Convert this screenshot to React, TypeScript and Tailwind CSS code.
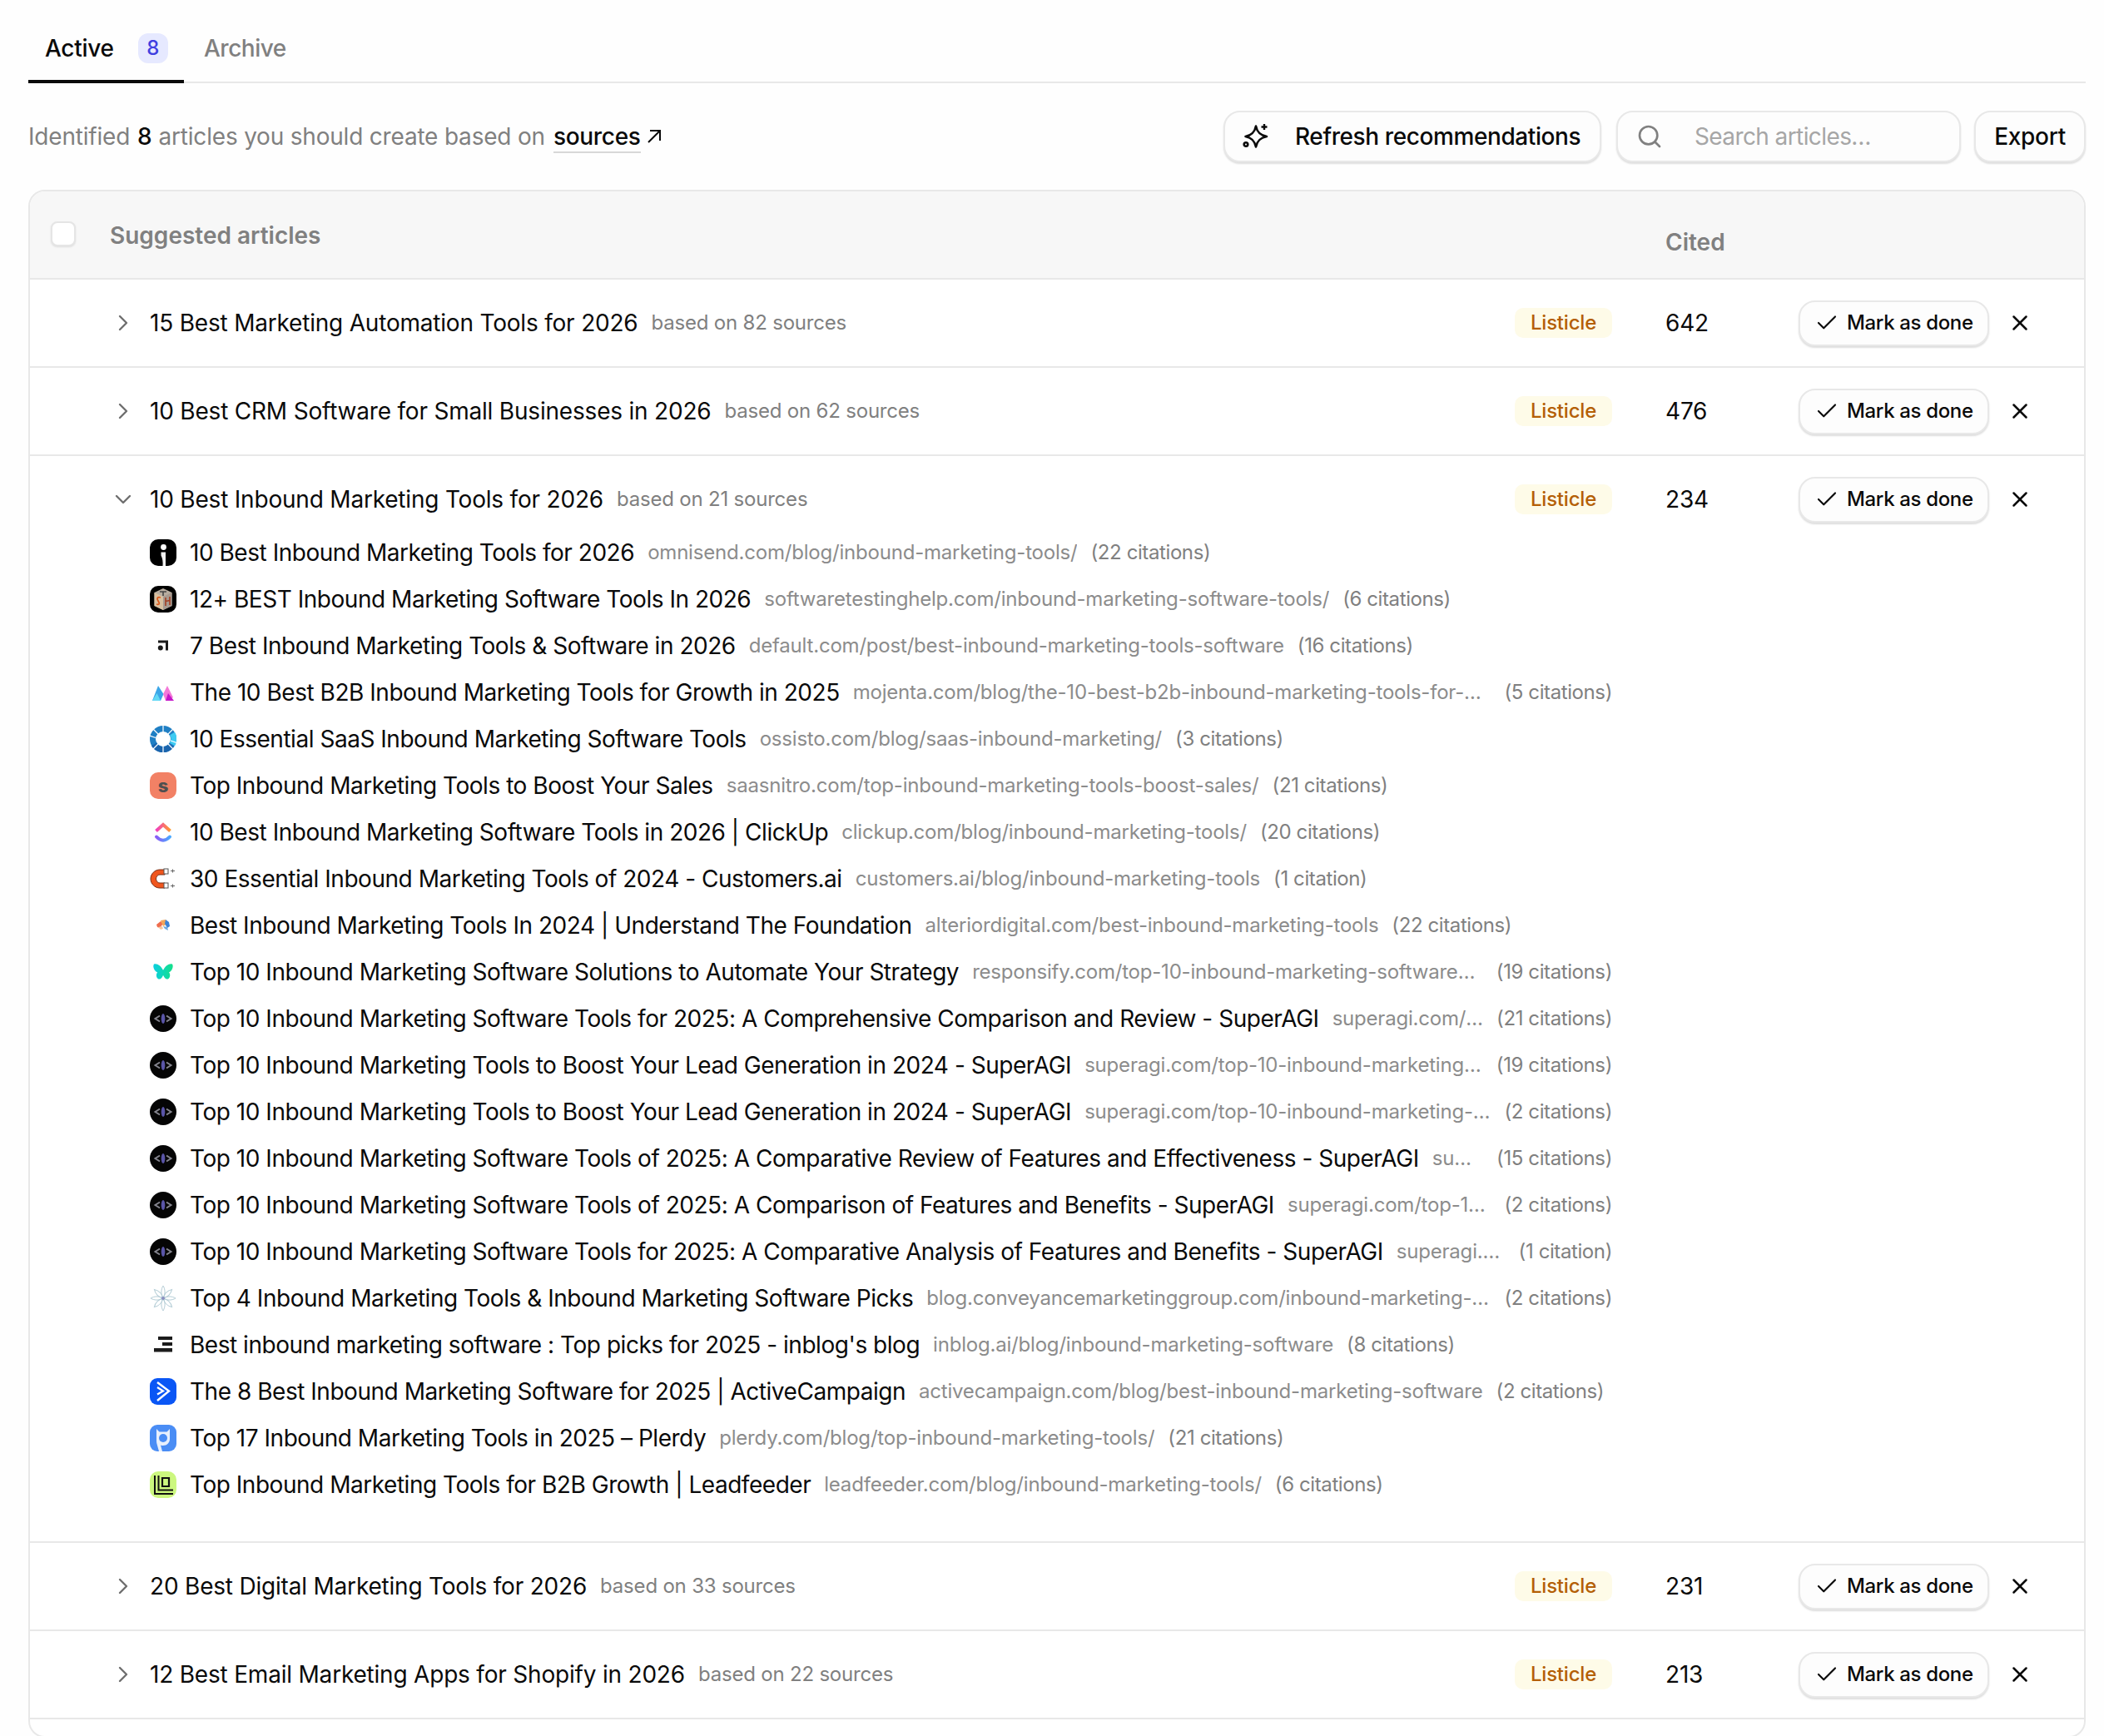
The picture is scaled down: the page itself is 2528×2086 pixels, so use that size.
import React from "react";
import { Check, ChevronDown, ChevronRight, Search, X } from "lucide-react";

type IconKind =
  | "omnisend" | "sth" | "default" | "mojenta" | "ossisto" | "saasnitro" | "clickup" | "customers"
  | "alterior" | "responsify" | "superagi" | "conveyance" | "inblog" | "activecampaign" | "plerdy" | "leadfeeder";

function Favicon({ kind }: { kind: IconKind }) {
  const c = "h-8 w-8 shrink-0";
  switch (kind) {
    case "omnisend":
      return (
        <svg className={c} viewBox="0 0 32 32">
          <rect width="32" height="32" rx="10" fill="#000" />
          <circle cx="16.5" cy="9.5" r="3.4" fill="#fff" />
          <path d="M13.5 15.500h5.500V32h-3.500c.4-5-.2-9-2-12.500z" fill="#f2f2f2" />
        </svg>
      );
    case "sth":
      return (
        <svg className={c} viewBox="0 0 32 32">
          <rect width="32" height="32" rx="10" fill="#000" />
          <path d="M16 3l10.500 5v16L16 29 5.500 24V8z" fill="#b8ada0" />
          <path d="M5.500 8L16 13v16L5.500 24z" fill="#d8c0a0" />
          <path d="M26.500 8L16 13v16l10.500-5z" fill="#a89a90" />
          <path d="M13 14c-4-1-5 1-3 4s2 5-2 4" fill="none" stroke="#d9591c" strokeWidth="1.800" />
          <path d="M19 14v10M24 13v10M19 18.500l5-1" fill="none" stroke="#a33f22" strokeWidth="1.600" />
          <path d="M12 7h8M16 7v5" stroke="#444" strokeWidth="1.600" />
        </svg>
      );
    case "default":
      return (
        <svg className={c} viewBox="0 0 32 32">
          <path d="M10 9.500h12v12h-3v-9h-9z" fill="#1a1a1a" />
          <circle cx="12.800" cy="18.500" r="3" fill="#1a1a1a" />
        </svg>
      );
    case "mojenta":
      return (
        <svg className={c} viewBox="0 0 32 32">
          <path d="M10 8l6.500 10-3.500 8H3z" fill="#3ba6e8" />
          <path d="M3 26l5.500-9 4.500 9z" fill="#62d8f5" />
          <path d="M21 8l-5 10 3 8h3l6-4z" fill="#f479d8" />
          <path d="M19 26l3-9 7 9z" fill="#c416c9" />
        </svg>
      );
    case "ossisto":
      return (
        <svg className={c} viewBox="0 0 32 32">
          <circle cx="16" cy="16" r="12.500" fill="none" stroke="#1f7fc4" strokeWidth="7" />
          <path d="M27 9.500A12.500 12.500 0 0 1 27 22.500" fill="none" stroke="#3ecbf2" strokeWidth="7" />
          <path d="M5 22.500A12.500 12.500 0 0 0 26 23.500" fill="none" stroke="#1a64ad" strokeWidth="7" />
          <path d="M16 0v7M16 25v7M0 12l7 2.500M25 18l7 2.500M4 28l6-6M22 10l6-6M4 4l6 6M22 22l6 6" stroke="#fff" strokeWidth="1.200" />
        </svg>
      );
    case "saasnitro":
      return (
        <div className="flex h-8 w-8 shrink-0 items-center justify-center rounded-[10px] bg-[#f28165]">
          <span className="text-[22px] font-extrabold leading-none text-[#4f4f4f]">s</span>
        </div>
      );
    case "clickup":
      return (
        <svg className={c} viewBox="0 0 32 32">
          <defs>
            <linearGradient id="cu1" x1="0" y1="0" x2="1" y2="0">
              <stop offset="0" stopColor="#f03ec2" />
              <stop offset="1" stopColor="#ff9a2e" />
            </linearGradient>
            <linearGradient id="cu2" x1="0" y1="0" x2="1" y2="0">
              <stop offset="0" stopColor="#8a5cf6" />
              <stop offset="1" stopColor="#4aa8ff" />
            </linearGradient>
          </defs>
          <path d="M7.500 14.500L16 7l8.500 7.500" fill="none" stroke="url(#cu1)" strokeWidth="4" />
          <path d="M8 21.500c5 5.500 11 5.500 16 0" fill="none" stroke="url(#cu2)" strokeWidth="4" strokeLinecap="round" />
        </svg>
      );
    case "customers":
      return (
        <svg className={c} viewBox="0 0 32 32">
          <path d="M18 5H12C6 5 1 10 1 16s5 11 11 11h6v-6h-6c-2.500 0-4.500-2.300-4.500-5s2-5 4.500-5h6z" fill="#f0561d" stroke="#7c2d12" strokeWidth="1" />
          <rect x="17" y="4" width="5" height="6" fill="#fff" stroke="#555" strokeWidth="1" />
          <rect x="17" y="21" width="5" height="6" fill="#fff" stroke="#555" strokeWidth="1" />
          <path d="M25 6.500h5M25 24.500h5M27.500 4.500v4M27.500 22.500v4" stroke="#666" strokeWidth="1" />
        </svg>
      );
    case "alterior":
      return (
        <svg className={c} viewBox="0 0 32 32">
          <path d="M8 15l5-4 3 3-4 5-3-1z" fill="#ef6c4d" />
          <path d="M13 10l6-1 2 5-5 3z" fill="#f2a65a" />
          <path d="M19 9l4 3 1 5-3 2-3-5z" fill="#3b82d6" />
          <path d="M16 17l5 1 1 4-4-2z" fill="#6ea8e0" />
          <path d="M10 18l5-1 1 3-3 1z" fill="#f5c7a0" />
        </svg>
      );
    case "responsify":
      return (
        <svg className={c} viewBox="0 0 32 32">
          <defs>
            <linearGradient id="rs" x1="0" y1="0" x2="1" y2="0">
              <stop offset="0" stopColor="#0bcfe0" />
              <stop offset="1" stopColor="#14e08a" />
            </linearGradient>
          </defs>
          <path d="M5 6.500c3.500-1.500 8.500 2 10.500 6.500.3.800.7.800 1 0 2-4.500 7-8 10.500-6.500 2 3-.5 8.500-4 10 2 2 1.500 6-.5 7.500-2.500 1.500-5-.5-6-3.500-.2-.5-.6-.5-.8 0-1 3-3.500 5-6 3.500-2-1.500-2.500-5.500-.5-7.500C5.500 15 3 9.500 5 6.500z" fill="url(#rs)" />
        </svg>
      );
    case "superagi":
      return (
        <svg className={c} viewBox="0 0 32 32">
          <circle cx="16" cy="16" r="16" fill="#050505" />
          <path d="M12 12.500l-5.500 3.500 5.500 3.500M20 12.500l5.500 3.500-5.500 3.500" fill="none" stroke="#85858f" strokeWidth="2" />
          <ellipse cx="16" cy="16" rx="2.300" ry="6" fill="#5a55a8" />
        </svg>
      );
    case "conveyance":
      return (
        <svg className={c} viewBox="0 0 32 32">
          {[0, 45, 90, 135, 180, 225, 270, 315].map((a) => (
            <path key={a} d="M16 16C13 11 13.500 5 16 1c2.500 4 3 10 0 15z" fill="none" stroke="#b4cdd6" strokeWidth="1" transform={`rotate(${a} 16 16)`} />
          ))}
          <circle cx="16" cy="16" r="2" fill="#8a8fc0" />
        </svg>
      );
    case "inblog":
      return (
        <svg className={c} viewBox="0 0 32 32">
          <path d="M10 6h17v4H10zM15 13h12v4H15zM5 20h22v4.500H5z" fill="#1c1c1c" />
        </svg>
      );
    case "activecampaign":
      return (
        <svg className={c} viewBox="0 0 32 32">
          <rect width="32" height="32" rx="9" fill="#0a56f5" />
          <path d="M9 5l14 10.500L9 27" fill="none" stroke="#fff" strokeWidth="2.400" />
          <path d="M9 11l7 4.500-7 4" fill="none" stroke="#fff" strokeWidth="2.200" />
        </svg>
      );
    case "plerdy":
      return (
        <svg className={c} viewBox="0 0 32 32">
          <rect width="32" height="32" rx="9" fill="#4a8df5" />
          <path d="M8 5l3.500 3.500h9L24 5v12c0 4.500-3.500 8-8 8-1.200 0-2.200-.2-3-.6L15 32h-4l-2.500-9C8 21.500 8 19 8 17z" fill="#e8f0fd" />
          <circle cx="16" cy="16" r="5" fill="#4a8df5" />
        </svg>
      );
    case "leadfeeder":
      return (
        <svg className={c} viewBox="0 0 32 32">
          <rect width="32" height="32" rx="10" fill="#ccf77f" />
          <path d="M6 5v22h22M10.500 5v17.500h17.500" fill="none" stroke="#111" strokeWidth="2" />
          <path d="M15 8h8v10h-8z" fill="none" stroke="#111" strokeWidth="2.200" />
        </svg>
      );
  }
}

const sources: { icon: IconKind; title: string; url: string; cites: string }[] = [
  { icon: "omnisend", title: "10 Best Inbound Marketing Tools for 2026", url: "omnisend.com/blog/inbound-marketing-tools/", cites: "(22 citations)" },
  { icon: "sth", title: "12+ BEST Inbound Marketing Software Tools In 2026", url: "softwaretestinghelp.com/inbound-marketing-software-tools/", cites: "(6 citations)" },
  { icon: "default", title: "7 Best Inbound Marketing Tools & Software in 2026", url: "default.com/post/best-inbound-marketing-tools-software", cites: "(16 citations)" },
  { icon: "mojenta", title: "The 10 Best B2B Inbound Marketing Tools for Growth in 2025", url: "mojenta.com/blog/the-10-best-b2b-inbound-marketing-tools-for-growth-in-2025/", cites: "(5 citations)" },
  { icon: "ossisto", title: "10 Essential SaaS Inbound Marketing Software Tools", url: "ossisto.com/blog/saas-inbound-marketing/", cites: "(3 citations)" },
  { icon: "saasnitro", title: "Top Inbound Marketing Tools to Boost Your Sales", url: "saasnitro.com/top-inbound-marketing-tools-boost-sales/", cites: "(21 citations)" },
  { icon: "clickup", title: "10 Best Inbound Marketing Software Tools in 2026 | ClickUp", url: "clickup.com/blog/inbound-marketing-tools/", cites: "(20 citations)" },
  { icon: "customers", title: "30 Essential Inbound Marketing Tools of 2024 - Customers.ai", url: "customers.ai/blog/inbound-marketing-tools", cites: "(1 citation)" },
  { icon: "alterior", title: "Best Inbound Marketing Tools In 2024 | Understand The Foundation", url: "alteriordigital.com/best-inbound-marketing-tools", cites: "(22 citations)" },
  { icon: "responsify", title: "Top 10 Inbound Marketing Software Solutions to Automate Your Strategy", url: "responsify.com/top-10-inbound-marketing-software-solutions/", cites: "(19 citations)" },
  { icon: "superagi", title: "Top 10 Inbound Marketing Software Tools for 2025: A Comprehensive Comparison and Review - SuperAGI", url: "superagi.com/top-10-inbound-marketing-software-tools", cites: "(21 citations)" },
  { icon: "superagi", title: "Top 10 Inbound Marketing Tools to Boost Your Lead Generation in 2024 - SuperAGI", url: "superagi.com/top-10-inbound-marketing-tools-to-boost-your-lead", cites: "(19 citations)" },
  { icon: "superagi", title: "Top 10 Inbound Marketing Tools to Boost Your Lead Generation in 2024 - SuperAGI", url: "superagi.com/top-10-inbound-marketing-tools-to-boost-your-lead", cites: "(2 citations)" },
  { icon: "superagi", title: "Top 10 Inbound Marketing Software Tools of 2025: A Comparative Review of Features and Effectiveness - SuperAGI", url: "superagi.com/top-10-inbound-marketing-software", cites: "(15 citations)" },
  { icon: "superagi", title: "Top 10 Inbound Marketing Software Tools of 2025: A Comparison of Features and Benefits - SuperAGI", url: "superagi.com/top-10-inbound-marketing-software", cites: "(2 citations)" },
  { icon: "superagi", title: "Top 10 Inbound Marketing Software Tools for 2025: A Comparative Analysis of Features and Benefits - SuperAGI", url: "superagi.com/top-10-inbound-marketing-software", cites: "(1 citation)" },
  { icon: "conveyance", title: "Top 4 Inbound Marketing Tools & Inbound Marketing Software Picks", url: "blog.conveyancemarketinggroup.com/inbound-marketing-tools-software-picks/", cites: "(2 citations)" },
  { icon: "inblog", title: "Best inbound marketing software : Top picks for 2025 - inblog's blog", url: "inblog.ai/blog/inbound-marketing-software", cites: "(8 citations)" },
  { icon: "activecampaign", title: "The 8 Best Inbound Marketing Software for 2025 | ActiveCampaign", url: "activecampaign.com/blog/best-inbound-marketing-software", cites: "(2 citations)" },
  { icon: "plerdy", title: "Top 17 Inbound Marketing Tools in 2025 – Plerdy", url: "plerdy.com/blog/top-inbound-marketing-tools/", cites: "(21 citations)" },
  { icon: "leadfeeder", title: "Top Inbound Marketing Tools for B2B Growth | Leadfeeder", url: "leadfeeder.com/blog/inbound-marketing-tools/", cites: "(6 citations)" },
];

function RowHeader({ title, count, cited, open }: { title: string; count: number; cited: number; open?: boolean }) {
  return (
    <div className="flex h-[104px] items-center pl-[96px]">
      <div className="flex w-8 justify-center text-[#6e6e6e]">
        {open ? <ChevronDown size={32} strokeWidth={1.8} /> : <ChevronRight size={32} strokeWidth={1.8} />}
      </div>
      <div className="ml-4 flex min-w-0 flex-1 items-center gap-4">
        <span className="text-[28px] leading-9 text-[#0a0a0a]">{title}</span>
        <span className="text-2xl text-[#808080]">based on {count} sources</span>
      </div>
      <span className="flex h-9 w-[117px] items-center justify-center rounded-[10px] bg-[#fefbe8] text-2xl font-medium text-[#b45f06]">Listicle</span>
      <span className="ml-16 w-[160px] text-[28px] text-[#0a0a0a]">{cited}</span>
      <button className="flex h-[55px] w-[229px] items-center gap-[9px] rounded-[20px] border-2 border-[#e8e8e8] bg-[#fdfdfd] pl-[17px] text-2xl font-medium tracking-[-0.35px] text-[#0a0a0a] shadow-[0_2px_2px_#dedede]">
        <Check size={30} strokeWidth={1.7} />
        Mark as done
      </button>
      <div className="ml-[17px] mr-[57px] flex w-10 justify-center text-[#0a0a0a]">
        <X size={30} strokeWidth={2} />
      </div>
    </div>
  );
}

export default function App() {
  return (
    <div className="h-[2086px] overflow-hidden bg-[#fefefe] pl-[34px] pr-[22px] font-[Inter,sans-serif] tracking-[-0.2px] antialiased">
      <div className="flex h-[100px] items-end border-b-2 border-[#e8e8e8]">
        <div className="-mb-[2px] flex h-[64px] w-[187px] items-start gap-[29px] border-b-4 border-[#0a0a0a] pl-5 pt-1 text-[28px] font-medium leading-9 tracking-[-0.3px] text-[#0a0a0a]">
          <span>Active</span>
          <span className="flex h-9 w-9 items-center justify-center rounded-[12px] bg-[#e6e9ff] text-2xl font-medium text-[#3f3fe0]">8</span>
        </div>
        <div className="-mb-[2px] ml-[24px] flex h-[64px] items-start pt-1 text-[28px] font-medium leading-9 tracking-[-0.5px] text-[#808080]">Archive</div>
      </div>

      <div className="mt-[33px] flex h-[62px] items-center">
        <div className="flex flex-1 items-center text-[28px] text-[#808080]">
          <span>Identified</span>
          <span className="ml-[9px] font-medium text-[#0a0a0a]">8</span>
          <span className="ml-[8px]">articles you should create based on</span>
          <span className="ml-[10px] mt-[1px] border-b-2 border-[#d8d8d8] font-medium leading-[36px] tracking-[-0.3px] text-[#0a0a0a]">sources</span>
          <svg className="ml-[6px] h-[20px] w-[20px]" viewBox="0 0 20 20" fill="none" stroke="#0a0a0a" strokeWidth="2">
            <path d="M5 3h12v12M17 3L3 17" />
          </svg>
        </div>
        <button className="flex h-[62px] w-[454px] items-center gap-[28px] rounded-[20px] border-2 border-[#e8e8e8] bg-[#fdfdfd] pl-[20px] text-[28px] font-medium tracking-[-0.4px] text-[#0a0a0a] shadow-[0_2px_2px_#dedede]">
          <svg className="h-9 w-9 shrink-0" viewBox="0 0 36 36" fill="none" stroke="#0a0a0a" strokeWidth="2.600" strokeLinejoin="round">
            <path d="M17 5.500C18.500 13 22 16.500 30 18C22 19.500 18.500 23 17 30.500C15.500 23 12 19.500 4.500 18C12 16.500 15.500 13 17 5.500Z" />
            <path d="M27 3v7M23.500 6.500h7" strokeWidth="2.400" />
            <circle cx="5" cy="27.500" r="2.300" />
          </svg>
          Refresh recommendations
        </button>
        <div className="ml-[18px] flex h-[62px] w-[414px] items-center rounded-[20px] border-2 border-[#e8e8e8] bg-[#fdfdfd] pl-[22px] text-[28px] tracking-[-0.6px] text-[#a6a6a6] shadow-[0_2px_2px_#dedede]">
          <Search size={32} strokeWidth={2} className="text-[#808080]" />
          <span className="ml-[38px]">Search articles…</span>
        </div>
        <button className="ml-4 flex h-[62px] w-[134px] items-center justify-center rounded-[20px] border-2 border-[#e8e8e8] bg-[#fdfdfd] text-[28px] font-medium tracking-[-0.3px] text-[#0a0a0a] shadow-[0_2px_2px_#dedede]">Export</button>
      </div>

      <div className="mt-[33px] overflow-hidden rounded-[20px] border-2 border-[#e8e8e8] bg-white">
        <div className="flex h-[106px] border-b-2 border-[#e8e8e8] bg-[#f7f7f7]">
          <div className="ml-[25px] mt-[36px] h-[30px] w-[30px] rounded-[8px] border-2 border-[#e5e5e5] bg-white shadow-[0_1px_2px_#dddddd]" />
          <span className="ml-[41px] mt-[35px] flex-1 text-[28px] font-semibold leading-9 tracking-normal text-[#808080]">Suggested articles</span>
          <span className="mt-[43px] w-[503px] pl-0 text-[28px] font-semibold leading-9 tracking-normal text-[#808080]">Cited</span>
        </div>
        <div className="border-b-2 border-[#e8e8e8]">
          <RowHeader title="15 Best Marketing Automation Tools for 2026" count={82} cited={642} />
        </div>
        <div className="border-b-2 border-[#e8e8e8]">
          <RowHeader title="10 Best CRM Software for Small Businesses in 2026" count={62} cited={476} />
        </div>
        <div className="border-b-2 border-[#e8e8e8] pb-10">
          <RowHeader title="10 Best Inbound Marketing Tools for 2026" count={21} cited={234} open />
          <div className="-mt-4 ml-[144px] mr-[567px]">
            {sources.map((s, i) => (
              <div key={i} className="flex h-14 items-center gap-4">
                <Favicon kind={s.icon} />
                <span className="shrink-0 text-[28px] leading-9 tracking-[-0.47px] text-[#0a0a0a]">{s.title}</span>
                <span className="min-w-0 truncate text-2xl text-[#8c8c8c]">{s.url}</span>
                <span className="shrink-0 text-2xl tracking-[-0.4px] text-[#808080]">{s.cites}</span>
              </div>
            ))}
          </div>
        </div>
        <div className="border-b-2 border-[#e8e8e8]">
          <RowHeader title="20 Best Digital Marketing Tools for 2026" count={33} cited={231} />
        </div>
        <div className="border-b-2 border-[#e8e8e8]">
          <RowHeader title="12 Best Email Marketing Apps for Shopify in 2026" count={22} cited={213} />
        </div>
        <div className="h-5" />
      </div>
    </div>
  );
}
